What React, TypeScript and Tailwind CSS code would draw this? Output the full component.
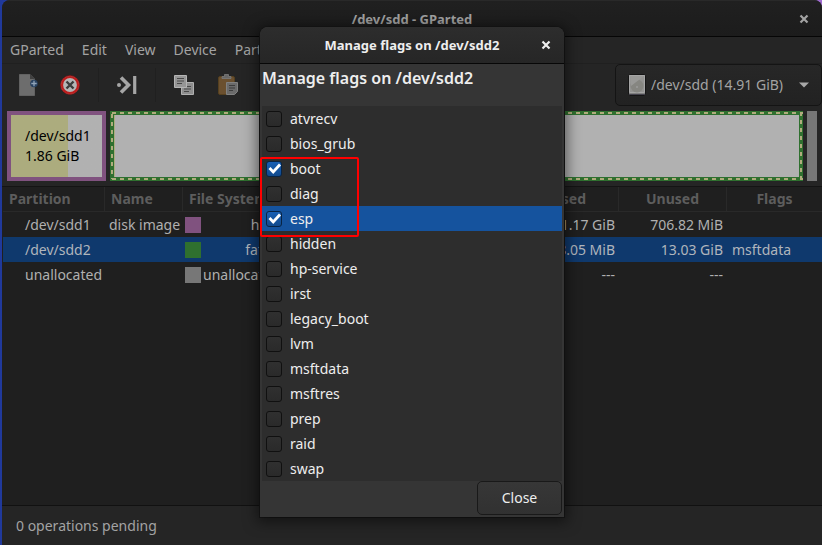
import { useState } from "react";
import type { ReactNode } from "react";

const flagNames = [
  "atvrecv", "bios_grub", "boot", "diag", "esp", "hidden", "hp-service", "irst",
  "legacy_boot", "lvm", "msftdata", "msftres", "prep", "raid", "swap",
];

const rows = [
  { dev: "/dev/sdd1", name: "disk image", swatch: "bg-[#80527f]", fs: "hfs+", size: "1.86 GiB", used: "1.17 GiB", unused: "706.82 MiB", flags: "" },
  { dev: "/dev/sdd2", name: "", swatch: "bg-[#2f702f]", fs: "fat32", size: "13.05 GiB", used: "18.05 MiB", unused: "13.03 GiB", flags: "msftdata" },
  { dev: "unallocated", name: "", swatch: "bg-[#777777]", fs: "unallocated", size: "1.00 MiB", used: "---", unused: "---", flags: "" },
];

function CloseIcon() {
  return (
    <svg width="10" height="10" viewBox="0 0 10 10" aria-hidden="true">
      <path d="M1.5 1.5 8.5 8.5M8.5 1.5 1.5 8.5" stroke="currentColor" strokeWidth="2.2" />
    </svg>
  );
}

function NewIcon() {
  return (
    <svg width="24" height="24" viewBox="0 0 24 24">
      <path d="M3.5 1.5h10.500l4.500 4.500v16.500h-15z" fill="#6d6d6d" stroke="#626262" />
      <path d="M14 1v5h5z" fill="#414141" />
      <circle cx="18" cy="10.500" r="3.800" fill="#28415f" />
      <path d="M15.300 10.500h5.400M18 7.800v5.400" stroke="#92a4b8" strokeWidth="1.3" />
    </svg>
  );
}

function StopIcon() {
  return (
    <svg width="24" height="24" viewBox="0 0 24 24">
      <circle cx="12" cy="12" r="9.3" fill="#b5b5b5" stroke="#8e0f0f" strokeWidth="1" />
      <circle cx="12" cy="12" r="8" fill="none" stroke="#bd1d1d" strokeWidth="2.2" />
      <path d="m8.500 8.500 7 7m0-7-7 7" stroke="#3b3b3b" strokeWidth="2.4" />
    </svg>
  );
}

function ApplyIcon() {
  return (
    <svg width="24" height="24" viewBox="0 0 24 24">
      <path d="m6 4.500 7.500 7.500L6 19.500" fill="none" stroke="#a6a6a6" strokeWidth="3.6" />
      <circle cx="4" cy="12" r="2" fill="#a6a6a6" />
      <path d="M19.700 3v18" stroke="#a6a6a6" strokeWidth="3.2" />
    </svg>
  );
}

function CopyIcon() {
  return (
    <svg width="24" height="24" viewBox="0 0 24 24">
      <path d="M9.500 9.500h12v12h-12z" fill="#8e8e8e" stroke="#b0b0b0" />
      <path d="M12 13.500h7M12 16h7M12 18.500h5" stroke="#484848" />
      <path d="M2.500 2.500h12v12h-12z" fill="#969696" stroke="#b5b5b5" />
      <path d="M5 5.500h7M5 8h7M5 10.500h5" stroke="#484848" />
    </svg>
  );
}

function PasteIcon() {
  return (
    <svg width="24" height="24" viewBox="0 0 24 24">
      <rect x="2.500" y="3.500" width="16" height="18" rx="1.500" fill="#6b502f" stroke="#55401f" />
      <path d="M6 5.500V3.500h2.500V1.500h4v2H15v2z" fill="#676767" stroke="#7b7b7b" strokeWidth=".8" />
      <path d="M10.500 9.500h11v9l-3 3h-8z" fill="#6b6b6b" stroke="#818181" />
      <path d="M13 12.500h6M13 15h6M13 17.500h4" stroke="#3d3d3d" />
    </svg>
  );
}

function DriveIcon() {
  return (
    <svg className="shrink-0" width="18" height="22" viewBox="0 0 18 22" aria-hidden="true">
      <rect x=".5" y=".5" width="17" height="21" rx="1" fill="#7e7e7e" stroke="#151515" />
      <path d="M1.500 1.500h15v17h-15z" fill="#939391" stroke="#a5a5a5" />
      <circle cx="9" cy="12" r="6.500" fill="#868681" />
      <path d="M2 2h14L3 12z" fill="#999997" />
      <circle cx="9" cy="13" r="1" fill="#9b9b9b" />
      <path d="M1 20.500h16" stroke="#45434d" />
    </svg>
  );
}

function ToolButton({ label, children }: { label: string; children: ReactNode }) {
  return (
    <button aria-label={label} className="flex w-6 shrink-0 items-center justify-center">
      {children}
    </button>
  );
}

function DashFrame() {
  const dash = { stroke: "#b0ac7d", strokeWidth: 2, strokeDasharray: "4 4" };
  return (
    <svg className="absolute inset-0 h-full w-full" aria-hidden="true">
      <line x1="2" y1="2" x2="100%" y2="2" {...dash} />
      <line x1="2" y1="68" x2="100%" y2="68" {...dash} />
      <line x1="2" y1="3" x2="2" y2="68" {...dash} />
      <svg x="100%" overflow="visible">
        <line x1="-2" y1="1" x2="-2" y2="68" {...dash} />
      </svg>
    </svg>
  );
}

function FlagsDialog() {
  const [checked, setChecked] = useState<string[]>(["boot", "esp"]);
  const toggle = (flag: string) =>
    setChecked((old) => (old.includes(flag) ? old.filter((f) => f !== flag) : [...old, flag]));
  return (
    <div
      role="dialog"
      aria-label="Manage flags on /dev/sdd2"
      className="absolute top-[27px] left-1/2 w-[304px] -translate-x-1/2 rounded-t-lg bg-[#353535] text-[#eeeeee] shadow-[0_2px_14px_3px_rgba(0,0,0,0.5),0_0_0_1px_#191919]"
    >
      <div className="grid h-[37px] grid-cols-[36px_1fr_36px] items-center rounded-t-lg border-b border-[#070707] bg-linear-to-b from-[#2d2d2d] to-[#262626]">
        <span />
        <span className="text-center text-[13px] font-bold">Manage flags on /dev/sdd2</span>
        <button aria-label="Close dialog" className="flex h-full items-center justify-center"><CloseIcon /></button>
      </div>
      <h2 className="h-[42px] px-[2px] pt-0.5 text-base leading-6 font-semibold">Manage flags on /dev/sdd2</h2>
      <ul className="mx-[2px] bg-[#2d2d2d]">
        {flagNames.map((flag) => {
          const on = checked.includes(flag);
          return (
            <li key={flag} className={flag === "esp" ? "bg-[#15539e]" : ""}>
              <label className="flex h-[25px] items-center gap-2 px-1">
                <span className="relative size-4 shrink-0">
                  <input
                    type="checkbox"
                    checked={on}
                    onChange={() => toggle(flag)}
                    className="block size-4 appearance-none rounded-[3px] border border-[#101010] bg-linear-to-b from-[#303030] to-[#2a2a2a] checked:border-[#092444] checked:from-[#185fb4] checked:to-[#124a8d]"
                  />
                  {on && (
                    <svg className="pointer-events-none absolute inset-0" width="16" height="16" viewBox="0 0 16 16" aria-hidden="true">
                      <path d="m3.500 7 3.700 4 6.800-7.500" fill="none" stroke="#fff" strokeWidth="2.800" />
                    </svg>
                  )}
                </span>
                {flag}
              </label>
            </li>
          );
        })}
      </ul>
      <div className="flex justify-end px-[2px] pb-0.5">
        <button className="h-[34px] w-[85px] rounded-[5px] border border-[#191919] bg-linear-to-b from-[#373737] to-[#313131]">Close</button>
      </div>
      <div className="pointer-events-none absolute top-[130px] left-0 h-[80px] w-[99px] rounded-xs border-2 border-[#ff0000]" />
    </div>
  );
}

const th = "border-r border-b border-[#292929] font-bold";

export default function App() {
  return (
    <div className="flex min-h-screen bg-linear-to-r from-[#20399b] to-[#a06bd0] pl-0.5 font-['Noto_Sans',sans-serif] text-[14px] leading-5 text-[#a3a3a3]">
      <div className="relative flex min-w-0 flex-1 flex-col overflow-hidden rounded-t-lg bg-[#252525]">
        <header className="grid h-[37px] shrink-0 grid-cols-[36px_1fr_36px] items-center border-t border-b border-t-[#292929] border-b-[#060606] bg-linear-to-b from-[#202020] to-[#1c1c1c]">
          <span />
          <h1 className="text-center text-[13px] font-bold">/dev/sdd - GParted</h1>
          <button aria-label="Close window" className="flex h-full items-center justify-center"><CloseIcon /></button>
        </header>

        <nav className="flex h-[27px] shrink-0 items-center gap-[18px] border-b border-[#202020] px-2">
          {["GParted", "Edit", "View", "Device", "Partition"].map((item) => (
            <button key={item}>{item}</button>
          ))}
        </nav>

        <div className="flex h-[42px] shrink-0 items-stretch justify-between">
          <div className="flex items-stretch px-3.5">
            <ToolButton label="New partition"><NewIcon /></ToolButton>
            <div className="w-[18px]" />
            <ToolButton label="Delete partition"><StopIcon /></ToolButton>
            <div className="my-1 mr-4 ml-4 w-px bg-[#202020]" />
            <ToolButton label="Resize or move"><ApplyIcon /></ToolButton>
            <div className="my-1 mr-4 ml-4 w-px bg-[#202020]" />
            <ToolButton label="Copy"><CopyIcon /></ToolButton>
            <div className="w-5" />
            <ToolButton label="Paste"><PasteIcon /></ToolButton>
          </div>
          <div className="relative flex w-[207px] items-center rounded-[5px] border border-[#141414] bg-linear-to-b from-[#272727] to-[#222222] pl-3">
            <DriveIcon />
            <select aria-label="Device" className="h-full min-w-0 flex-1 appearance-none bg-transparent pl-[5px]">
              <option>/dev/sdd (14.91 GiB)</option>
            </select>
            <svg className="pointer-events-none absolute right-3" width="10" height="6" viewBox="0 0 10 6" aria-hidden="true">
              <path d="M0 .5h10L5 5.500z" fill="#a8a8a8" />
            </svg>
          </div>
        </div>

        <section aria-label="Disk layout" className="flex shrink-0 gap-1 border-b border-[#141414] px-[5px] py-[5px]">
          <div className="h-[70px] w-[99px] shrink-0 border-4 border-[#80527f] bg-linear-to-r from-[#acac7e] from-[57px] to-[#b1b1b1] to-[57px] pt-[11px] pl-3.5 text-black">
            /dev/sdd1<br />1.86 GiB
          </div>
          <div className="relative h-[70px] flex-1 bg-[#2f702f] p-1">
            <div className="h-full border-l border-[#acac7e] bg-[#b1b1b1]" />
            <DashFrame />
          </div>
          <div className="h-[70px] w-2.5 shrink-0 bg-[#777777]" />
        </section>

        <main className="flex-1 border-b border-[#111111] bg-[#1f1f1f] pl-px">
          <table className="w-full table-fixed border-separate border-spacing-0 whitespace-nowrap">
            <colgroup>
              <col className="w-[102px]" />
              <col className="w-[78px]" />
              <col className="w-[108px]" />
              <col />
              <col className="w-[100px]" />
              <col className="w-[108px]" />
              <col className="w-[95px]" />
            </colgroup>
            <thead>
              <tr className="h-[25px] text-[#5d5d5d]">
                <th className={`${th} pl-1.5 text-left`}>Partition</th>
                <th className={`${th} pl-1.5 text-left`}>Name</th>
                <th className={`${th} pl-1.5 text-left`}>File System</th>
                <th className={th}>Size</th>
                <th className={`${th} pr-8 text-right`}>Used</th>
                <th className={th}>Unused</th>
                <th className="border-b border-[#292929] font-bold">Flags</th>
              </tr>
            </thead>
            <tbody>
              {rows.map((row) => (
                <tr key={row.dev} className={row.dev === "/dev/sdd2" ? "h-[25px] bg-[#0f396d] text-[#b0b5bc]" : "h-[25px] text-[#b0b0b0]"}>
                  <td className="pl-[22px]">{row.dev}</td>
                  <td className="pl-1">{row.name}</td>
                  <td>
                    <div className="flex items-center gap-0.5 pl-0.5">
                      <span className={`size-4 shrink-0 ${row.swatch}`} />
                      <span className="w-[76px] text-right">{row.fs}</span>
                    </div>
                  </td>
                  <td className="text-right">{row.size}</td>
                  <td className="pr-1 text-right">{row.used}</td>
                  <td className="pr-1 text-right">{row.unused}</td>
                  <td className="pl-[5px]">{row.flags}</td>
                </tr>
              ))}
            </tbody>
          </table>
        </main>

        <footer className="flex h-[39px] shrink-0 items-center px-3.5">0 operations pending</footer>
        <FlagsDialog />
      </div>
    </div>
  );
}
